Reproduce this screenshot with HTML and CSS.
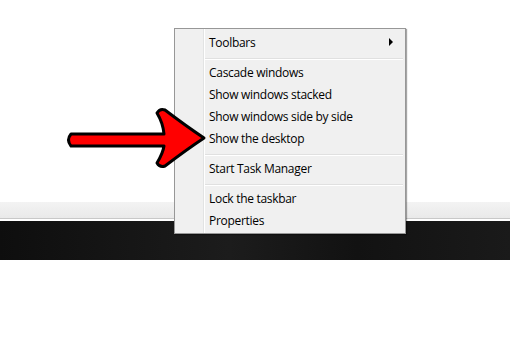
FILE: index.html
```html
<!DOCTYPE html>
<html lang="en">
<head>
    <meta charset="UTF-8">
    <title>Taskbar menu</title>
    <link rel="stylesheet" href="styles.css">
</head>
<body>
    <div class="desktop"></div>
    <div class="taskbar">
        <div class="taskbar__top"></div>
        <div class="taskbar__bar"></div>
    </div>

    <div class="menu">
        <div class="menu__item">Toolbars <span class="menu__sub"></span></div>
        <div class="menu__sep"></div>
        <div class="menu__item">Cascade windows</div>
        <div class="menu__item">Show windows stacked</div>
        <div class="menu__item">Show windows side by side</div>
        <div class="menu__item">Show the desktop</div>
        <div class="menu__sep"></div>
        <div class="menu__item">Start Task Manager</div>
        <div class="menu__sep"></div>
        <div class="menu__item">Lock the taskbar</div>
        <div class="menu__item">Properties</div>
    </div>

    <svg class="arrow" width="510" height="346" viewBox="0 0 510 346">
        <path d="M71,134 L164,134 Q163,123 157,113 Q160,108 165,110 Q186,126 204,138 Q186,150 165,166 Q160,168 157,163 Q163,153 164,146 L71,146 Q66,140 71,134 Z"
              fill="#ff0000" stroke="#000" stroke-width="3" stroke-linejoin="round"/>
    </svg>
</body>
</html>
```

FILE: styles.css
```css
body {
    margin: 0;
    background: #fff;
    font-family: "Open Sans", "Noto Sans", sans-serif;
}
.desktop {
    height: 202px;
}
.taskbar__top {
    height: 16px;
    background: linear-gradient(#f3f3f3, #e9e9e9);
    border-bottom: 1px solid #c8c8c8;
    box-shadow: 0 1px 0 #fff;
}
.taskbar__bar {
    margin-top: 2px;
    height: 39px;
    background: linear-gradient(90deg, #0e0e0e 0%, #1c1c1c 45%, #121212 70%, #1a1a1a 100%);
}
.menu {
    position: absolute;
    left: 174px;
    top: 28px;
    width: 230px;
    padding: 2px 0;
    border: 1px solid #979797;
    background: linear-gradient(90deg, #f0f0f0 28px, #e2e3e3 28px, #e2e3e3 29px, #fff 29px, #fff 30px, #f0f0f0 30px);
    box-shadow: 1px 1px 1px rgba(0,0,0,0.35);
}
.menu__item {
    display: flex;
    align-items: center;
    height: 22px;
    padding: 0 12px 0 34px;
    font-size: 12px;
    letter-spacing: -0.3px;
    color: #000;
}
.menu__sub {
    margin-left: auto;
    width: 0;
    height: 0;
    border-top: 4px solid transparent;
    border-bottom: 4px solid transparent;
    border-left: 4px solid #000;
}
.menu__sep {
    height: 1px;
    margin: 5px 2px 1px 30px;
    background: #e0e0e0;
    border-bottom: 1px solid #fff;
}
.arrow {
    position: absolute;
    left: 0;
    top: 0;
}
```
